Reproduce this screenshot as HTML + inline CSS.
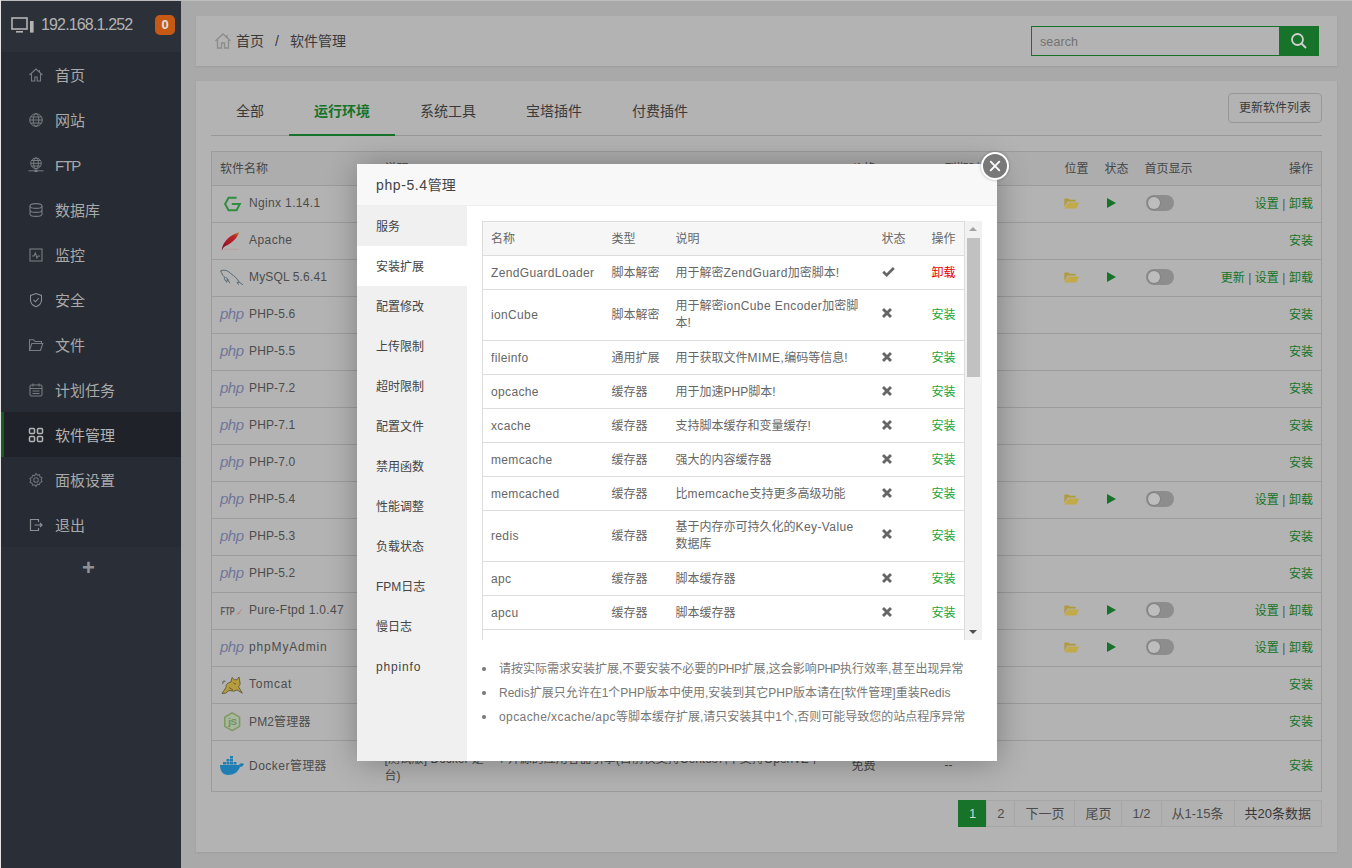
<!DOCTYPE html>
<html lang="zh-CN">
<head>
<meta charset="utf-8">
<title>宝塔Linux面板</title>
<style>
*{box-sizing:border-box;margin:0;padding:0}
html,body{width:1352px;height:868px;overflow:hidden}
body{background:#a9a9a9;font-family:"Liberation Sans","Noto Sans CJK SC",sans-serif;font-size:12px;color:#464646;position:relative}
a{text-decoration:none;color:inherit}
ul{list-style:none}
.edge-l{position:absolute;left:0;top:0;width:1px;height:868px;background:#e4e4e4;z-index:50}
.edge-t{position:absolute;left:0;top:0;width:1352px;height:1px;background:#bdbdbd;z-index:49}
/* sidebar */
#side{position:absolute;left:1px;top:1px;width:180px;height:867px;background:#272b33;color:#a5a5a5}
#side .ip{height:51px;background:#2c3139;position:relative;color:#b3b3b3;font-size:15px;line-height:50px}
#side .ip .txt{position:absolute;left:40px;top:-1px;letter-spacing:-.85px;font-size:16px}
#side .ip svg{position:absolute;left:10px;top:15px}
#side .ip .badge{position:absolute;left:154px;top:14px;width:20px;height:20px;border-radius:5px;background:#c65a14;color:#e0e0e0;font-size:13px;font-weight:bold;line-height:20px;text-align:center}
#side ul{padding-top:0;background:#272b33}
#side li{height:45px;line-height:45px;position:relative;font-size:15px;color:#a9a9a9}
#side li span{position:absolute;left:54px;top:1px}
#side li svg{position:absolute;left:27px;top:15px}
#side li.cur{background:#1f2329;color:#b3b3b3;border-left:3px solid #1a5c28}
#side li.cur span{left:51px}
#side li.cur svg{left:24px}
#side .plus{position:absolute;left:0;top:546px;width:180px;height:321px;background:#2a2f37}
#side .plus b{position:absolute;left:81px;top:8px;font-size:22px;font-weight:bold;color:#8f9295;line-height:26px}
/* breadcrumb */
#pos{position:absolute;left:196px;top:16px;width:1141px;height:50px;background:#b3b3b3;box-shadow:0 1px 2px rgba(0,0,0,.08);font-size:14px;line-height:50px;color:#3a3a3a}
#pos .bc{position:absolute;left:40px;top:0}
#pos svg.home{position:absolute;left:18px;top:16px}
#pos .search{position:absolute;left:835px;top:10px;width:288px;height:30px;border:1px solid #167329;background:#b3b3b3}
#pos .search span{position:absolute;left:8px;top:0;line-height:30px;font-size:12.5px;color:#727272;letter-spacing:.1px}
#pos .search i{position:absolute;right:0;top:-1px;width:39px;height:30px;background:#167329}
#pos .search i svg{position:absolute;left:11px;top:6px}
/* main */
#main{position:absolute;left:196px;top:81px;width:1141px;height:771px;background:#b3b3b3;box-shadow:0 1px 2px rgba(0,0,0,.08)}
#tabs{position:absolute;left:15px;top:5px;width:1111px;height:50px;border-bottom:1px solid #999}
#tabs a{position:absolute;top:0;height:50px;line-height:50px;font-size:14px;color:#3a3a3a;text-align:center}
#tabs a.on{color:#167329;font-weight:bold;border-bottom:2px solid #167329;height:50px}
#upd{position:absolute;left:1032px;top:12px;width:94px;height:30px;border:1px solid #979797;border-radius:4px;font-size:12px;line-height:28px;text-align:center;color:#3a3a3a;background:#b3b3b3}
table{border-collapse:collapse}
#soft{position:absolute;left:15px;top:70px;width:1111px;border:1px solid #9c9c9c;table-layout:fixed}
#soft th{height:34px;background:#adadad;font-weight:normal;text-align:left;padding:0 8px 3px;color:#464646;font-size:12px;border-bottom:1px solid #9c9c9c}
#soft td{height:37px;padding:0 8px 3px;border-top:1px solid #9c9c9c;font-size:12px;color:#464646;vertical-align:middle;white-space:nowrap}
#soft tr:hover td{background:none}
#soft td.nm{font-size:12px;letter-spacing:.15px;position:relative;padding-left:37px;color:#4c4c4c}
#soft td.nm .ic{position:absolute;left:8px;top:50%;margin-top:-10px;width:24px;height:20px}
#soft td.nm b{font-weight:normal}
#soft td.op,#soft th.op{text-align:right}
#soft td.op{color:#167329}
#soft td.op i{font-style:normal;color:#555;padding:0 3.5px}
.fold{display:inline-block;vertical-align:middle;position:relative;left:-.5px;top:.5px}
.play{display:inline-block;width:0;height:0;border-left:9px solid #167329;border-top:5.5px solid transparent;border-bottom:5.5px solid transparent;vertical-align:middle;margin-left:2px;position:relative;top:0}
.sw{display:inline-block;width:28px;height:16px;border-radius:8px;background:#8d8d8d;position:relative;vertical-align:middle;margin-left:1px}
.sw:after{content:"";position:absolute;left:2px;top:2px;width:12px;height:12px;border-radius:6px;background:#bdbdbd;box-shadow:0 0 0 1px #838383}
.php{font-style:italic;font-size:15px;color:#70769a;letter-spacing:-.5px;font-family:"Liberation Sans",sans-serif}
#page{position:absolute;right:15px;top:719px;height:27px;font-size:13px;color:#4d4d4d;display:flex}
#page span{display:block;height:27px;line-height:25px;border:1px solid #a6a6a6;margin-left:-1px;padding:0 10px;background:#b1b1b1;white-space:nowrap}
#page span.on{background:#167329;border-color:#167329;color:#d5d5d5}
/* modal */
#shadow{position:absolute;left:357px;top:164px;width:640px;height:597px;box-shadow:1px 1px 30px rgba(0,0,0,.3);background:#fff}
#dlg{position:absolute;left:357px;top:164px;width:640px;height:597px;background:#fff;overflow:hidden;border-radius:2px}
#dlg .tt{position:absolute;left:0;top:0;width:640px;height:42px;background:#f8f8f8;border-bottom:1px solid #eee;font-size:14px;line-height:42px;padding-left:19px;color:#444}
#dlg .menu{position:absolute;left:0;top:42px;width:110px;height:555px;background:#f0f0f0}
#dlg .menu p{height:40px;line-height:43px;padding-left:19px;font-size:12px;color:#444}
#dlg .menu p.on{background:#fff}
#ext{position:absolute;left:125px;top:57px;width:483px;height:419px;overflow:hidden}
#ext table{width:483px;border:1px solid #ddd;table-layout:fixed}
#ext th{height:34px;background:#f6f6f6;font-weight:normal;text-align:left;padding:0 8px 2px;font-size:12px;color:#666;border-bottom:1px solid #ddd}
#ext td{height:34px;padding:9px 8px 7px;border-top:1px solid #ddd;font-size:12px;line-height:17px;color:#666;vertical-align:middle}
#ext tr.two td{padding:8px 8px 8px}
#ext i.l{font-style:normal;letter-spacing:.4px}
#ext td.g{color:#20a53a}
#ext td.r{color:#e60000}
#ext td:first-child{letter-spacing:.35px}
#ext td.x{padding-left:8px;line-height:0}
#ext td.x svg{display:block;position:relative;top:-2px;left:.5px}
#sbar{position:absolute;left:608px;top:57px;width:17px;height:419px;background:#f1f1f1}
#sbar .th{position:absolute;left:2px;top:17px;width:13px;height:139px;background:#c1c1c1}
#sbar .up{position:absolute;left:4px;top:6px;width:0;height:0;border-left:4px solid transparent;border-right:4px solid transparent;border-bottom:4px solid #a3a3a3}
#sbar .dn{position:absolute;left:4px;bottom:6px;width:0;height:0;border-left:4px solid transparent;border-right:4px solid transparent;border-top:4px solid #505050}
#help{position:absolute;left:125px;top:492.6px;font-size:12px;color:#777;line-height:24px}
#help li{padding-left:17px;position:relative;white-space:nowrap}
#help li:before{content:"";position:absolute;left:0;top:10px;width:4px;height:4px;border-radius:2px;background:#777}
#close{position:absolute;left:981px;top:152px;width:28px;height:28px;border-radius:14px;background:#787878;border:2.5px solid #fff;box-shadow:0 0 3px rgba(0,0,0,.3)}
#close svg{position:absolute;left:4.5px;top:4.5px}
</style>
</head>
<body>
<div id="side">
  <div class="ip">
    <svg width="24" height="20" viewBox="0 0 24 20"><rect x="1" y="2" width="15" height="11" fill="none" stroke="#b3b3b3" stroke-width="1.6"/><rect x="5" y="15" width="7" height="1.6" fill="#b3b3b3"/><rect x="19" y="5" width="3.6" height="11.6" fill="#b3b3b3"/></svg>
    <span class="txt">192.168.1.252</span>
    <span class="badge">0</span>
  </div>
  <ul>
    <li><svg width="16" height="16" viewBox="0 0 16 16" fill="none" stroke="#777c82" stroke-width="1.1"><path d="M1.5 8 8 2l6.5 6M3.5 7v7h3.3v-4h2.4v4h3.3V7M11.5 3v2"/></svg><span>首页</span></li>
    <li><svg width="16" height="16" viewBox="0 0 16 16" fill="none" stroke="#777c82" stroke-width="1"><circle cx="8" cy="8" r="6.3"/><ellipse cx="8" cy="8" rx="2.8" ry="6.3"/><path d="M1.7 8h12.6M2.6 5h10.8M2.6 11h10.8"/></svg><span>网站</span></li>
    <li><svg width="16" height="16" viewBox="0 0 16 16" fill="none" stroke="#777c82" stroke-width="1"><circle cx="8" cy="6.300" r="5.300"/><ellipse cx="8" cy="6.300" rx="2.300" ry="5.300"/><path d="M2.700 6.300h10.600M3.500 3.500h9M3.500 9h9M.500 13.800h15"/><rect x="6.500" y="12.500" width="3" height="2.600" fill="#777c82" stroke="none"/></svg><span style="letter-spacing:-1px">FTP</span></li>
    <li><svg width="16" height="16" viewBox="0 0 16 16" fill="none" stroke="#777c82" stroke-width="1.1"><ellipse cx="8" cy="4" rx="6" ry="2.4"/><path d="M2 4v8c0 1.3 2.7 2.4 6 2.4s6-1.100 6-2.400V4M2 8c0 1.300 2.700 2.400 6 2.400S14 9.300 14 8"/></svg><span>数据库</span></li>
    <li><svg width="16" height="16" viewBox="0 0 16 16" fill="none" stroke="#777c82" stroke-width="1.1"><rect x="2" y="2" width="12" height="12"/><path d="M4 9h2l1.300-3 1.700 5 1.200-2H12"/></svg><span>监控</span></li>
    <li><svg width="16" height="16" viewBox="0 0 16 16" fill="none" stroke="#8a8f94" stroke-width="1.1"><path d="M8 1.500 13.500 3.500v4.500c0 3.200-2.400 5.500-5.500 6.800C4.900 13.500 2.500 11.200 2.500 8V3.500Z"/><path d="M5.500 7.800 7.500 9.800 10.800 6"/></svg><span>安全</span></li>
    <li><svg width="16" height="16" viewBox="0 0 16 16" fill="none" stroke="#777c82" stroke-width="1.1"><path d="M1.500 13.500V2.800h4.200l1.400 1.700h6.400v2M1.500 13.500 3.800 6.500h11l-2.300 7Z"/></svg><span>文件</span></li>
    <li><svg width="16" height="16" viewBox="0 0 16 16" fill="none" stroke="#777c82" stroke-width="1.1"><rect x="2" y="3" width="12" height="11" rx="1.500"/><path d="M2 6.500h12M5 1.500v3M11 1.500v3M4.500 9h7M4.500 11.500h7"/></svg><span>计划任务</span></li>
    <li class="cur"><svg width="16" height="16" viewBox="0 0 16 16" fill="none" stroke="#b3b3b3" stroke-width="1.500"><rect x="1.500" y="1.500" width="5" height="5" rx="1"/><rect x="9.500" y="1.500" width="5" height="5" rx="1"/><rect x="1.500" y="9.500" width="5" height="5" rx="1"/><rect x="9.500" y="9.500" width="5" height="5" rx="1"/></svg><span>软件管理</span></li>
    <li><svg width="16" height="16" viewBox="0 0 16 16" fill="none" stroke="#6c7177" stroke-width="1.100"><circle cx="8" cy="8" r="2.300"/><path d="M8 1.500l1.300 1.700 2.100-.5.600 2.100 2 .900-.900 2 .900 2-2 .900-.600 2.100-2.100-.500L8 14.500l-1.300-1.700-2.100.500-.600-2.100-2-.900.900-2-.900-2 2-.900.600-2.100 2.100.500Z"/></svg><span>面板设置</span></li>
    <li><svg width="16" height="16" viewBox="0 0 16 16" fill="none" stroke="#8a8f94" stroke-width="1.200"><path d="M10.500 5V2.500h-8v11h8V11M6.500 8h7.500M12 6l2 2-2 2"/></svg><span>退出</span></li>
  </ul>
  <div class="plus"><b>+</b></div>
</div>

<div id="pos">
  <svg class="home" width="18" height="18" viewBox="0 0 18 18" fill="none" stroke="#8c8c8c" stroke-width="1.300"><path d="M1.500 9 9 2l7.500 7M3.500 8v8h4v-5h3v5h4V8M13 3v2.500"/></svg>
  <div class="bc">首页<span style="margin:0 11px 0 11px">/</span>软件管理</div>
  <div class="search"><span>search</span><i><svg width="18" height="18" viewBox="0 0 18 18" fill="none" stroke="#d0d0d0" stroke-width="1.800"><circle cx="7.500" cy="7.500" r="5.500"/><path d="M11.500 11.500 16 16"/></svg></i></div>
</div>

<div id="main">
  <div id="tabs">
    <a style="left:0;width:78px">全部</a>
    <a class="on" style="left:78px;width:106px">运行环境</a>
    <a style="left:184px;width:106px">系统工具</a>
    <a style="left:290px;width:106px">宝塔插件</a>
    <a style="left:396px;width:106px">付费插件</a>
  </div>
  <div id="upd">更新软件列表</div>
  <table id="soft">
    <colgroup><col style="width:165px"><col style="width:467px"><col style="width:93px"><col style="width:120px"><col style="width:40px"><col style="width:40px"><col style="width:70px"><col></colgroup>
    <tr><th>软件名称</th><th>说明</th><th>价格</th><th>到期时间</th><th>位置</th><th>状态</th><th>首页显示</th><th class="op">操作</th></tr>
    <tr><td class="nm"><span class="ic"><svg width="24" height="20" viewBox="0 0 24 20"><path d="M16.600 3.800H8.600L5.100 10l3.500 6.300h8L19.800 10h-8" fill="none" stroke="#2f8f40" stroke-width="2"/></svg></span><b style="letter-spacing:.35px">Nginx 1.14.1</b></td><td>轻量级，占有内存少，并发能力强</td><td>免费</td><td>--</td><td><svg class="fold" width="15" height="11" viewBox="0 0 15 11"><path d="M.300 1.300Q.300 .500 1.100 .500H4.500L5.600 1.800H11Q11.800 1.800 11.800 2.600V3.600H3.300L.300 9Z" fill="#b09a40"/><path d="M3.600 4.500H15L12.300 10.500H.500Z" fill="#c2aa48"/></svg></td><td><span class="play"></span></td><td><span class="sw"></span></td><td class="op">设置<i>|</i>卸载</td></tr>
    <tr><td class="nm"><span class="ic"><svg width="24" height="20" viewBox="0 0 24 20"><defs><linearGradient id="apg" x1="0" y1="1" x2="1" y2="0"><stop offset="0" stop-color="#5c0f2c"/><stop offset=".35" stop-color="#a81826"/><stop offset=".75" stop-color="#b8282a"/><stop offset="1" stop-color="#c8781c"/></linearGradient></defs><path d="M4.500 18.300H19" stroke="#bd9a9a" stroke-width=".8"/><path d="M1.800 19.500C2.200 12.500 8 4.500 19.200 1.300 17.500 6.500 12.500 12.300 5 15.300 3.600 16.300 2.600 17.800 1.800 19.500Z" fill="url(#apg)"/></svg></span><b style="letter-spacing:.45px">Apache</b></td><td>世界排名第一，快速、可靠并且可通过简单的API扩充</td><td>免费</td><td>--</td><td></td><td></td><td></td><td class="op">安装</td></tr>
    <tr><td class="nm"><span class="ic"><svg width="26" height="20" viewBox="0 0 26 20" fill="none" stroke="#4d5f69" stroke-width=".9"><path d="M.800 2.800C4 1.300 8.500 2.600 11.200 6c3.300 2 6.200 4.800 8 8.200l3.800 2.600M19.200 14.200l-2.200.300 1.700 2.200M.800 2.800c.700 2.400 1.700 4.300 3.400 5.800 0 2.200.900 4.300 2.600 5.600l.400-2.800 2.900 3.800M5.500 9.500c1.500.300 2.500 1.500 3 3"/></svg></span>MySQL 5.6.41</td><td>MySQL是一种关系数据库管理系统!</td><td>免费</td><td>--</td><td><svg class="fold" width="15" height="11" viewBox="0 0 15 11"><path d="M.300 1.300Q.300 .500 1.100 .500H4.500L5.600 1.800H11Q11.800 1.800 11.800 2.600V3.600H3.300L.300 9Z" fill="#b09a40"/><path d="M3.600 4.500H15L12.300 10.500H.500Z" fill="#c2aa48"/></svg></td><td><span class="play"></span></td><td><span class="sw"></span></td><td class="op">更新<i>|</i>设置<i>|</i>卸载</td></tr>
    <tr><td class="nm"><span class="ic php">php</span>PHP-5.6</td><td>PHP是世界上最好的编程语言</td><td>免费</td><td>--</td><td></td><td></td><td></td><td class="op">安装</td></tr>
    <tr><td class="nm"><span class="ic php">php</span>PHP-5.5</td><td>PHP是世界上最好的编程语言</td><td>免费</td><td>--</td><td></td><td></td><td></td><td class="op">安装</td></tr>
    <tr><td class="nm"><span class="ic php">php</span>PHP-7.2</td><td>PHP是世界上最好的编程语言</td><td>免费</td><td>--</td><td></td><td></td><td></td><td class="op">安装</td></tr>
    <tr><td class="nm"><span class="ic php">php</span>PHP-7.1</td><td>PHP是世界上最好的编程语言</td><td>免费</td><td>--</td><td></td><td></td><td></td><td class="op">安装</td></tr>
    <tr><td class="nm"><span class="ic php">php</span>PHP-7.0</td><td>PHP是世界上最好的编程语言</td><td>免费</td><td>--</td><td></td><td></td><td></td><td class="op">安装</td></tr>
    <tr><td class="nm"><span class="ic php">php</span>PHP-5.4</td><td>PHP是世界上最好的编程语言</td><td>免费</td><td>--</td><td><svg class="fold" width="15" height="11" viewBox="0 0 15 11"><path d="M.300 1.300Q.300 .500 1.100 .500H4.500L5.600 1.800H11Q11.800 1.800 11.800 2.600V3.600H3.300L.300 9Z" fill="#b09a40"/><path d="M3.600 4.500H15L12.300 10.500H.500Z" fill="#c2aa48"/></svg></td><td><span class="play"></span></td><td><span class="sw"></span></td><td class="op">设置<i>|</i>卸载</td></tr>
    <tr><td class="nm"><span class="ic php">php</span>PHP-5.3</td><td>PHP是世界上最好的编程语言</td><td>免费</td><td>--</td><td></td><td></td><td></td><td class="op">安装</td></tr>
    <tr><td class="nm"><span class="ic php">php</span>PHP-5.2</td><td>PHP是世界上最好的编程语言</td><td>免费</td><td>--</td><td></td><td></td><td></td><td class="op">安装</td></tr>
    <tr><td class="nm"><span class="ic"><svg width="24" height="20" viewBox="0 0 24 20"><text x=".600" y="13.700" font-size="10.400" font-weight="bold" font-family="Liberation Sans,sans-serif" fill="#5a5a5a" textLength="14.200" lengthAdjust="spacingAndGlyphs">FTP</text><path d="M15.500 13.500c2-.500 5-3.500 7.500-7.500-1.500 3.500-3 5.500-4.500 6.500l2-.500c-1.500 1.200-3.500 1.800-5 1.500Z" fill="#c07a84"/></svg></span><b style="letter-spacing:.3px">Pure-Ftpd 1.0.47</b></td><td>PureFTPd是一款专注于程序健壮和软件安全的免费FTP服务器软件</td><td>免费</td><td>--</td><td><svg class="fold" width="15" height="11" viewBox="0 0 15 11"><path d="M.300 1.300Q.300 .500 1.100 .500H4.500L5.600 1.800H11Q11.800 1.800 11.800 2.600V3.600H3.300L.300 9Z" fill="#b09a40"/><path d="M3.600 4.500H15L12.300 10.500H.500Z" fill="#c2aa48"/></svg></td><td><span class="play"></span></td><td><span class="sw"></span></td><td class="op">设置<i>|</i>卸载</td></tr>
    <tr><td class="nm"><span class="ic php">php</span><b style="letter-spacing:.85px">phpMyAdmin</b></td><td>著名Web端MySQL管理工具</td><td>免费</td><td>--</td><td><svg class="fold" width="15" height="11" viewBox="0 0 15 11"><path d="M.300 1.300Q.300 .500 1.100 .500H4.500L5.600 1.800H11Q11.800 1.800 11.800 2.600V3.600H3.300L.300 9Z" fill="#b09a40"/><path d="M3.600 4.500H15L12.300 10.500H.500Z" fill="#c2aa48"/></svg></td><td><span class="play"></span></td><td><span class="sw"></span></td><td class="op">设置<i>|</i>卸载</td></tr>
    <tr><td class="nm"><span class="ic"><svg width="24" height="20" viewBox="0 0 24 20"><path d="M5.500 6.500C3.500 5.500 2.200 7 3 9" fill="none" stroke="#5a6470" stroke-width="1.100"/><path d="M2 18.500 6 12.500C5.500 9.500 8 7.500 11 7L12 2.500l2.500 2.200h2.500L19 2l.800 4.500c.800 2 .200 4-1.300 5.200l3.800 6.500-5.300-3.300-3 1.300-5-.700-3.500 2.700Z" fill="#b59c3c" stroke="#4a4432" stroke-width=".7"/><path d="M9 12.500l4 2.500M13.500 7.500l1 1.500 1.500-.200" fill="none" stroke="#4a4432" stroke-width=".7"/></svg></span><b style="letter-spacing:.75px">Tomcat</b></td><td>开发和调试JSP程序的首选</td><td>免费</td><td>--</td><td></td><td></td><td></td><td class="op">安装</td></tr>
    <tr><td class="nm"><span class="ic"><svg width="24" height="20" viewBox="0 0 24 20"><path d="M12.200 .800l7.400 4.300v9.200l-7.400 4.300-7.400-4.300V5.100Z" fill="#a9b79d" stroke="#7d9a62" stroke-width="1.500"/><text x="12.300" y="13.300" font-size="9.500" font-family="Liberation Sans,sans-serif" text-anchor="middle" fill="#6f8f58" font-weight="bold" letter-spacing="-.4">jS</text></svg></span>PM2管理器</td><td>node.js管理器，内置 node.js + npm + nvm + pm2!</td><td>免费</td><td>--</td><td></td><td></td><td></td><td class="op">安装</td></tr>
    <tr><td class="nm" style="height:51px"><span class="ic"><svg width="26" height="20" viewBox="0 0 26 20" style="position:relative;left:-1px"><path d="M1 9h19c1-2 3-2 5-1-1 2-2 3-4 3-2 5-6 8-12 8C4 19 1 15 1 9Z" fill="#1f7fb5"/><path d="M4 6h3v2.500H4zM7.500 6h3v2.500h-3zM11 6h3v2.500h-3zM7.500 3h3v2.500h-3zM11 3h3v2.500h-3zM11 0h3v2.500h-3zM14.500 6h3v2.500h-3z" fill="#1f7fb5"/></svg></span><b style="letter-spacing:.5px">Docker</b>管理器</td><td style="white-space:normal;line-height:17px;padding:4px 8px 0">[测试版] Docker 是一个开源的应用容器引擎(目前仅支持Centos7,不支持OpenVZ平台)</td><td>免费</td><td>--</td><td></td><td></td><td></td><td class="op">安装</td></tr>
  </table>
  <div id="page"><span class="on">1</span><span>2</span><span>下一页</span><span>尾页</span><span>1/2</span><span>从1-15条</span><span style="color:#383838">共20条数据</span></div>
</div>

<div id="shadow"></div>
<div id="dlg">
  <div class="tt"><span style="letter-spacing:.6px">php-5.4</span>管理</div>
  <div class="menu">
    <p>服务</p><p class="on">安装扩展</p><p>配置修改</p><p>上传限制</p><p>超时限制</p><p>配置文件</p><p>禁用函数</p><p>性能调整</p><p>负载状态</p><p>FPM日志</p><p>慢日志</p><p style="letter-spacing:.85px">phpinfo</p>
  </div>
  <div id="ext">
    <table>
      <colgroup><col style="width:121px"><col style="width:64px"><col style="width:206px"><col style="width:50px"><col></colgroup>
      <tr><th>名称</th><th>类型</th><th>说明</th><th>状态</th><th>操作</th></tr>
      <tr><td>ZendGuardLoader</td><td>脚本解密</td><td>用于解密<i class="l">ZendGuard</i>加密脚本!</td><td class="x"><svg width="13" height="10" viewBox="0 0 12.4 9.9"><path d="M0 5.600 1.900 3.700 4.400 6.200 10.500 0 12.400 1.900 4.400 9.900Z" fill="#666"/></svg></td><td class="r">卸载</td></tr>
      <tr class="two"><td>ionCube</td><td>脚本解密</td><td>用于解密<i class="l">ionCube Encoder</i>加密脚本!</td><td class="x"><svg width="10" height="10" viewBox="0 0 9.8 9.8"><path d="M1 1 8.800 8.800M8.800 1 1 8.800" stroke="#666" stroke-width="2.800" fill="none"/></svg></td><td class="g">安装</td></tr>
      <tr><td>fileinfo</td><td>通用扩展</td><td>用于获取文件<i class="l">MIME,</i>编码等信息!</td><td class="x"><svg width="10" height="10" viewBox="0 0 9.8 9.8"><path d="M1 1 8.800 8.800M8.800 1 1 8.800" stroke="#666" stroke-width="2.800" fill="none"/></svg></td><td class="g">安装</td></tr>
      <tr><td>opcache</td><td>缓存器</td><td>用于加速PHP脚本!</td><td class="x"><svg width="10" height="10" viewBox="0 0 9.8 9.8"><path d="M1 1 8.800 8.800M8.800 1 1 8.800" stroke="#666" stroke-width="2.800" fill="none"/></svg></td><td class="g">安装</td></tr>
      <tr><td>xcache</td><td>缓存器</td><td>支持脚本缓存和变量缓存!</td><td class="x"><svg width="10" height="10" viewBox="0 0 9.8 9.8"><path d="M1 1 8.800 8.800M8.800 1 1 8.800" stroke="#666" stroke-width="2.800" fill="none"/></svg></td><td class="g">安装</td></tr>
      <tr><td>memcache</td><td>缓存器</td><td>强大的内容缓存器</td><td class="x"><svg width="10" height="10" viewBox="0 0 9.8 9.8"><path d="M1 1 8.800 8.800M8.800 1 1 8.800" stroke="#666" stroke-width="2.800" fill="none"/></svg></td><td class="g">安装</td></tr>
      <tr><td>memcached</td><td>缓存器</td><td>比<i class="l">memcache</i>支持更多高级功能</td><td class="x"><svg width="10" height="10" viewBox="0 0 9.8 9.8"><path d="M1 1 8.800 8.800M8.800 1 1 8.800" stroke="#666" stroke-width="2.800" fill="none"/></svg></td><td class="g">安装</td></tr>
      <tr class="two"><td>redis</td><td>缓存器</td><td>基于内存亦可持久化的<i class="l">Key-Value</i><br>数据库</td><td class="x"><svg width="10" height="10" viewBox="0 0 9.8 9.8"><path d="M1 1 8.800 8.800M8.800 1 1 8.800" stroke="#666" stroke-width="2.800" fill="none"/></svg></td><td class="g">安装</td></tr>
      <tr><td>apc</td><td>缓存器</td><td>脚本缓存器</td><td class="x"><svg width="10" height="10" viewBox="0 0 9.8 9.8"><path d="M1 1 8.800 8.800M8.800 1 1 8.800" stroke="#666" stroke-width="2.800" fill="none"/></svg></td><td class="g">安装</td></tr>
      <tr><td>apcu</td><td>缓存器</td><td>脚本缓存器</td><td class="x"><svg width="10" height="10" viewBox="0 0 9.8 9.8"><path d="M1 1 8.800 8.800M8.800 1 1 8.800" stroke="#666" stroke-width="2.800" fill="none"/></svg></td><td class="g">安装</td></tr>
      <tr><td>imagemagick</td><td>通用扩展</td><td>Imagick高性能图形库</td><td class="x"><svg width="10" height="10" viewBox="0 0 9.8 9.8"><path d="M1 1 8.800 8.800M8.800 1 1 8.800" stroke="#666" stroke-width="2.800" fill="none"/></svg></td><td class="g">安装</td></tr>
    </table>
  </div>
  <div id="sbar"><i class="up"></i><i class="th"></i><i class="dn"></i></div>
  <ul id="help">
    <li>请按实际需求安装扩展,不要安装不必要的<span style="letter-spacing:-.5px">PHP</span>扩展,这会影响<span style="letter-spacing:-.5px">PHP</span>执行效率,甚至出现异常</li>
    <li>Redis扩展只允许在1个PHP版本中使用,安装到其它PHP版本请在[软件管理]重装Redis</li>
    <li><span style="letter-spacing:.42px">opcache/xcache/apc</span>等脚本缓存扩展,请只安装其中1个,否则可能导致您的站点程序异常</li>
  </ul>
</div>
<div id="close"><svg width="14" height="14" viewBox="0 0 14 14" stroke="#fff" stroke-width="1.900" stroke-linecap="round"><path d="M2.700 2.700l8.600 8.600M11.300 2.700l-8.600 8.600"/></svg></div>
<div class="edge-t"></div><div class="edge-l"></div>
</body>
</html>
